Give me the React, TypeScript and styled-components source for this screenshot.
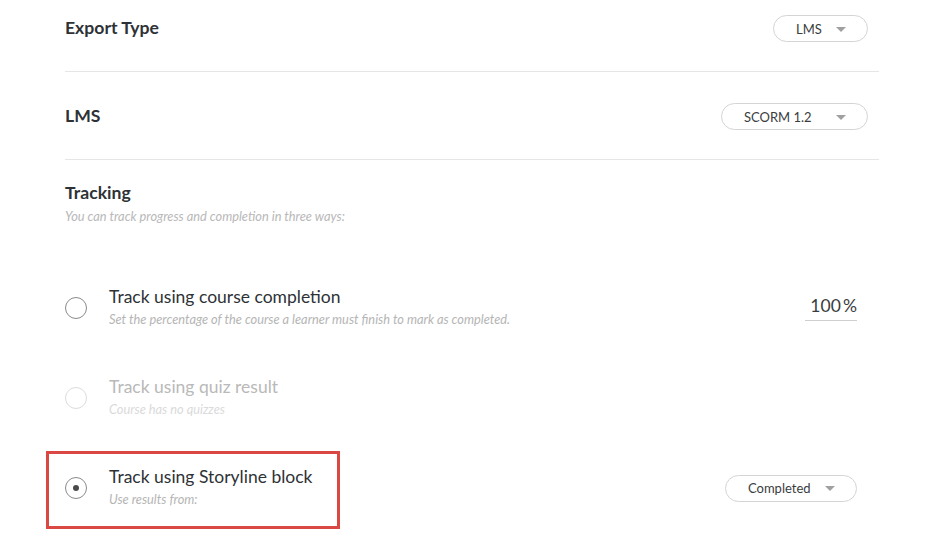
import React from 'react';
import styled, { createGlobalStyle } from 'styled-components';

const GlobalStyle = createGlobalStyle`
	html, body {
		margin: 0;
		padding: 0;
		background: #ffffff;
		font-family: Lato, 'Open Sans', sans-serif;
		color: #2e3236;
	}
`;

type Option = {
	title: string;
	note: string;
	checked?: boolean;
	disabled?: boolean;
	highlight?: boolean;
	control?: 'percent' | 'select';
};

const options: Option[] = [
	{
		title: 'Track using course completion',
		note: 'Set the percentage of the course a learner must finish to mark as completed.',
		control: 'percent',
	},
	{
		title: 'Track using quiz result',
		note: 'Course has no quizzes',
		disabled: true,
	},
	{
		title: 'Track using Storyline block',
		note: 'Use results from:',
		checked: true,
		highlight: true,
		control: 'select',
	},
];

function Select({ value, width }: { value: string; width: number }) {
	return (
		<Pill $width={width}>
			<span>{value}</span>
			<Caret />
		</Pill>
	);
}

export default function App() {
	return (
		<>
			<GlobalStyle />
			<Page>
				<SettingRow $top={15}>
					<Heading>Export Type</Heading>
					<Select value="LMS" width={95} />
				</SettingRow>
				<SettingRow $top={31}>
					<Heading>LMS</Heading>
					<Select value="SCORM 1.2" width={147} />
				</SettingRow>

				<Tracking>
					<Heading>Tracking</Heading>
					<Hint>You can track progress and completion in three ways:</Hint>

					<OptionList>
						{options.map(opt => (
							<OptionRow key={opt.title}>
								{opt.highlight && <Highlight />}
								<Radio $checked={opt.checked} $disabled={opt.disabled} />
								<OptionText>
									<OptionTitle $disabled={opt.disabled}>{opt.title}</OptionTitle>
									<OptionNote $disabled={opt.disabled}>{opt.note}</OptionNote>
								</OptionText>
								{opt.control === 'percent' && <Percent>100&thinsp;%</Percent>}
								{opt.control === 'select' && <Select value="Completed" width={132} />}
							</OptionRow>
						))}
					</OptionList>
				</Tracking>
			</Page>
		</>
	);
}

const Page = styled.div`
	width: 814px;
	min-height: 557px;
	margin-left: 65px;
`;

const SettingRow = styled.div<{ $top: number }>`
	display: flex;
	justify-content: space-between;
	align-items: center;
	padding: ${p => p.$top}px 11px 29px 0;
	border-bottom: 1px solid #e6e6e6;
`;

const Heading = styled.h2`
	margin: 0 0 1px;
	font-size: 17.6px;
	line-height: 22px;
	font-weight: 700;
	color: #2e3236;
`;

const Pill = styled.div<{ $width: number }>`
	display: flex;
	align-items: center;
	justify-content: space-between;
	box-sizing: border-box;
	width: ${p => p.$width}px;
	height: 27px;
	padding: 0 21px 0 22px;
	border: 1px solid #d4d4d4;
	border-radius: 14px;
	font-size: 13px;
	color: #3a3d40;
`;

const Caret = styled.i`
	width: 0;
	height: 0;
	border-left: 5px solid transparent;
	border-right: 5px solid transparent;
	border-top: 5px solid #a0a0a0;
	margin-top: 1px;
`;

const Tracking = styled.section`
	padding-top: 22px;
`;

const Hint = styled.p`
	margin: 2px 0 0;
	font-size: 12.8px;
	line-height: 20px;
	font-style: italic;
	color: #b8b8b8;
`;

const OptionList = styled.div`
	display: flex;
	flex-direction: column;
	gap: 46px;
	margin-top: 60px;
	padding-right: 22px;
`;

const OptionRow = styled.div`
	position: relative;
	display: flex;
	align-items: center;
`;

const Highlight = styled.div`
	position: absolute;
	left: -19px;
	top: -15px;
	width: 294px;
	height: 78px;
	box-sizing: border-box;
	border: 3px solid #db4844;
	pointer-events: none;
`;

const Radio = styled.span<{ $checked?: boolean; $disabled?: boolean }>`
	position: relative;
	flex: none;
	box-sizing: border-box;
	width: 22px;
	height: 22px;
	margin-right: 22px;
	border-radius: 50%;
	border: 1px solid ${p => (p.$disabled ? '#dcdcdc' : '#8a8a8a')};

	&::after {
		content: '';
		display: ${p => (p.$checked ? 'block' : 'none')};
		position: absolute;
		left: 50%;
		top: 50%;
		width: 6px;
		height: 6px;
		margin: -3px 0 0 -3px;
		border-radius: 50%;
		background: #4a4a4a;
	}
`;

const OptionText = styled.div`
	flex: 1;
	display: flex;
	flex-direction: column;
`;

const OptionTitle = styled.div<{ $disabled?: boolean }>`
	font-size: 17.5px;
	line-height: 22px;
	color: ${p => (p.$disabled ? '#b9b9b9' : '#2e3236')};
`;

const OptionNote = styled.div<{ $disabled?: boolean }>`
	font-size: 12.8px;
	line-height: 22px;
	font-style: italic;
	color: ${p => (p.$disabled ? '#dadada' : '#b5b5b5')};
`;

const Percent = styled.div`
	width: 52px;
	box-sizing: border-box;
	padding-bottom: 4px;
	margin-top: 1px;
	border-bottom: 1px solid #cfcfcf;
	text-align: right;
	font-size: 17.5px;
	line-height: 20px;
	color: #3a3d40;
`;
